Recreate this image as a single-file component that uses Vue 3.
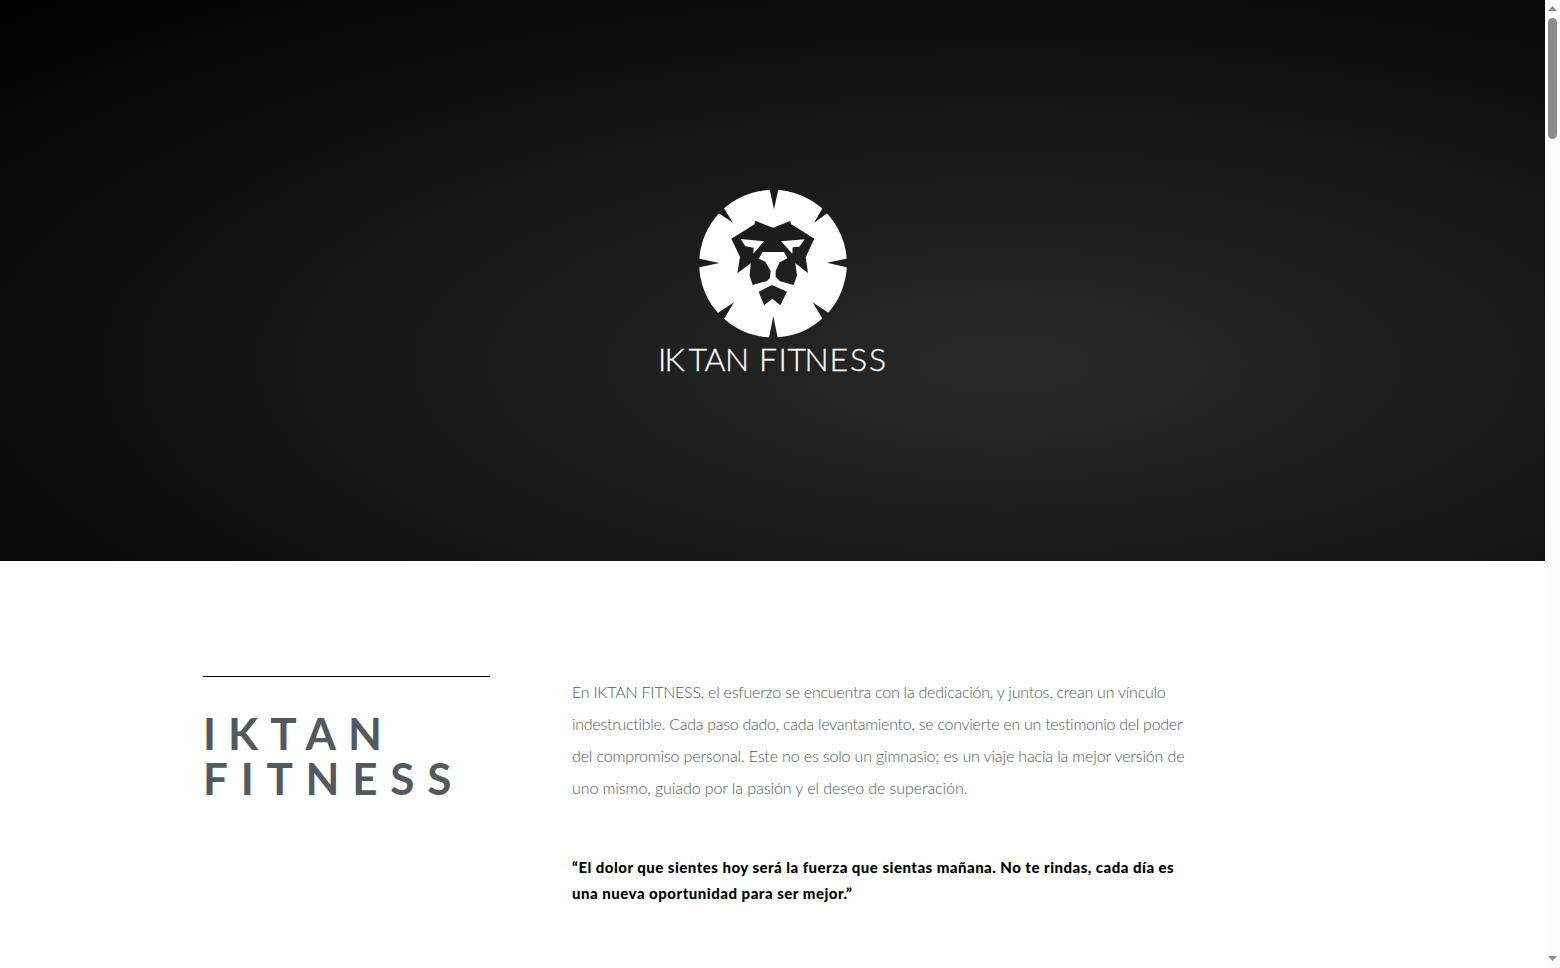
<script setup>
const brand = [
  { text: 'IKTAN', cls: 'brand-a' },
  { text: 'FITNESS', cls: 'brand-b' },
]
const intro = [
  'En IKTAN FITNESS, el esfuerzo se encuentra con la dedicación, y juntos, crean un vínculo',
  'indestructible. Cada paso dado, cada levantamiento, se convierte en un testimonio del poder',
  'del compromiso personal. Este no es solo un gimnasio; es un viaje hacia la mejor versión de',
  'uno mismo, guiado por la pasión y el deseo de superación.',
]
const quote = [
  '“El dolor que sientes hoy será la fuerza que sientas mañana. No te rindas, cada día es',
  'una nueva oportunidad para ser mejor.”',
]
</script>

<template>
  <div class="window">
    <main class="page">
      <header class="hero">
        <svg class="lion" viewBox="0 0 498 498" aria-hidden="true">
          <defs>
            <mask id="mane">
              <circle cx="249" cy="251" r="221.5" fill="#fff" />
              <path d="M238 24H266L252 88ZM236 478H264L250 408ZM22 235V263L88 249ZM476 235V263L411 248ZM82 97L99 80L129 128ZM400 80L416 97L372 128ZM79 402L99 422L132 367ZM401 422L421 402L368 367Z" fill="#000" />
              <g transform="translate(104 90)">
                <path fill="#000" d="M91 32L145 53L197 33L199 42L269 86L243 142L250 189L212 160L217 196L207 225L166 214L153 201V183L165 157L188 145L178 126H114L102 146L122 155L138 183L136 203L127 213L84 225L75 197L78 160L38 190L46 141L20 86L90 43Z" />
                <path fill="#fff" d="M48 87L118 94L86 131L87 113L62 109ZM169 94L240 88L224 110L204 112L203 131Z" />
                <path fill="#000" d="M142 225L187 245L167 286L143 266L118 286L102 245Z" />
              </g>
            </mask>
          </defs>
          <rect width="498" height="498" fill="#fff" mask="url(#mane)" />
        </svg>
        <svg class="wordmark" viewBox="0 0 240 40">
          <text y="31" x="5 11.5 35.5 51.5 72">IKTAN</text>
          <text y="31" x="106 125.5 134.5 151.5 176.5 197 216">FITNESS</text>
        </svg>
      </header>
      <section class="about">
        <div class="title">
          <h1><span v-for="b in brand" :key="b.text" :class="b.cls">{{ b.text }}</span></h1>
        </div>
        <div class="copy">
          <p class="intro"><span v-for="(l, i) in intro" :key="i" :class="'intro-' + i">{{ l }}</span></p>
          <p class="quote"><span v-for="(l, i) in quote" :key="i" :class="'quote-' + i">{{ l }}</span></p>
        </div>
      </section>
    </main>
    <aside class="scrollbar">
      <svg width="15" height="18" viewBox="0 0 15 18"><path d="M3 11L7.5 6L12 11Z" fill="#8b8b8b" /></svg>
      <div class="thumb"></div>
      <svg class="down" width="15" height="18" viewBox="0 0 15 18"><path d="M3 6L7.5 11L12 6Z" fill="#8b8b8b" /></svg>
    </aside>
  </div>
</template>

<style>
body { margin: 0; background: #fff; overflow: hidden; }
</style>

<style scoped>
.window { display: flex; width: 1560px; height: 968px; overflow: hidden; background: #fff; font-family: Lato, sans-serif; }
.page { width: 1545px; }
.hero {
  box-sizing: border-box; height: 561px; padding-top: 180px;
  display: flex; flex-direction: column; align-items: center;
  background: radial-gradient(ellipse farthest-corner at 65% 65%, #292929, #000);
}
.lion { width: 166px; height: 166px; flex: none; margin-left: 1px; }
.wordmark { width: 240px; height: 40px; margin-top: -6px; margin-left: 1px; flex: none; }
.wordmark text { font-family: Lato, sans-serif; font-weight: 300; font-size: 32px; fill: #fff; stroke: #fff; stroke-width: 0.3px; }
.about { display: flex; padding: 115px 0 0 203px; }
.title { width: 287px; margin-right: 82px; border-top: 1px solid #000; }
h1 { margin: 34px 0 0; font-size: 44px; line-height: 45px; font-weight: 700; color: #54595f; }
h1 span, p span { display: block; width: max-content; white-space: nowrap; font-variant-ligatures: none; }
.brand-a { letter-spacing: 12px; }
.brand-b { letter-spacing: 12.75px; }
p { margin: 0; }
.intro { font-size: 16px; line-height: 32px; font-weight: 300; color: #54595f; }
.intro-0 { letter-spacing: -0.235px; }
.intro-1 { letter-spacing: -0.275px; }
.intro-2 { letter-spacing: -0.145px; }
.intro-3 { letter-spacing: -0.075px; }
.quote { margin-top: 50px; font-size: 15px; line-height: 26px; font-weight: 900; color: #000; }
.quote-0 { letter-spacing: 0.475px; }
.quote-1 { letter-spacing: 0.5px; }
.scrollbar { width: 15px; height: 968px; background: #fcfcfc; display: flex; flex-direction: column; align-items: center; }
.scrollbar svg { display: block; flex: none; }
.thumb { width: 9px; height: 121px; border-radius: 4.5px; background: #8b8b8b; }
.down { margin-top: auto; }
</style>
